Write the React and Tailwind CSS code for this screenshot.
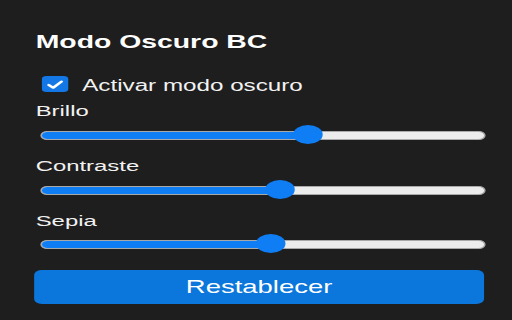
import React, { useState } from 'react';

const TRACK_W = 287;
const THUMB = 19;

// --- Slider (track + blue fill + round thumb) ---
function Slider({ value }) {
  const center = TRACK_W * value;
  return (
    <div className="relative h-[20px] ml-[4px] w-[287px] flex items-center">
      <div className="relative w-full h-[9px] rounded-full bg-[#ececec] border border-[#a9a9a9] overflow-hidden">
        <div className="absolute left-0 top-0 h-full bg-[#0f7ef5]" style={{ width: `${center}px` }} />
      </div>
      <div
        className="absolute top-0 h-[19px] w-[19px] rounded-full bg-[#0f7ef5]"
        style={{ left: `${center - THUMB / 2}px` }}
      />
    </div>
  );
}

export default function App() {
  const [enabled] = useState(true);
  const sliders = [
    { label: 'Brillo', value: 0.6025 },
    { label: 'Contraste', value: 0.539 },
    { label: 'Sepia', value: 0.519 },
  ];

  return (
    <div className="w-[512px] h-[320px] overflow-hidden bg-[#1e1e1e] font-['Liberation_Sans',Arial,sans-serif]">
      <div className="w-[330px] origin-top-left scale-x-[1.5515] pt-[31px] pl-[22px] text-[#f2f2f2]">
        <h1 className="ml-[1px] text-[18.3px] leading-[22px] font-bold text-white">Modo Oscuro BC</h1>

        <label className="mt-[23px] flex items-start h-[20px]">
          <span className="ml-[5px] w-[17px] h-[16px] rounded-[3px] bg-[#1378e6] flex items-center justify-center">
            {enabled && (
              <svg viewBox="0 0 16 16" className="w-[13px] h-[13px]">
                <path d="M3 8.5 L6.5 12 L13 4.5" fill="none" stroke="white" strokeWidth="2.6" strokeLinecap="round" strokeLinejoin="round" />
              </svg>
            )}
          </span>
          <span className="ml-[9px] text-[15.6px] leading-[20px]">Activar modo oscuro</span>
        </label>

        {sliders.map((s, i) => (
          <div key={s.label} className={i === 0 ? 'mt-[5px]' : 'mt-[11px]'}>
            <div className="ml-[1px] text-[15.4px] leading-[20px]">{s.label}</div>
            <div className={i === 2 ? 'mt-[3px]' : 'mt-[4px]'}>
              <Slider value={s.value} />
            </div>
          </div>
        ))}

        <button className="mt-[16px] w-[290px] h-[34px] rounded-[5px] bg-[#0b76db] text-white text-[17.7px] leading-[22px]">
          Restablecer
        </button>
      </div>
    </div>
  );
}
